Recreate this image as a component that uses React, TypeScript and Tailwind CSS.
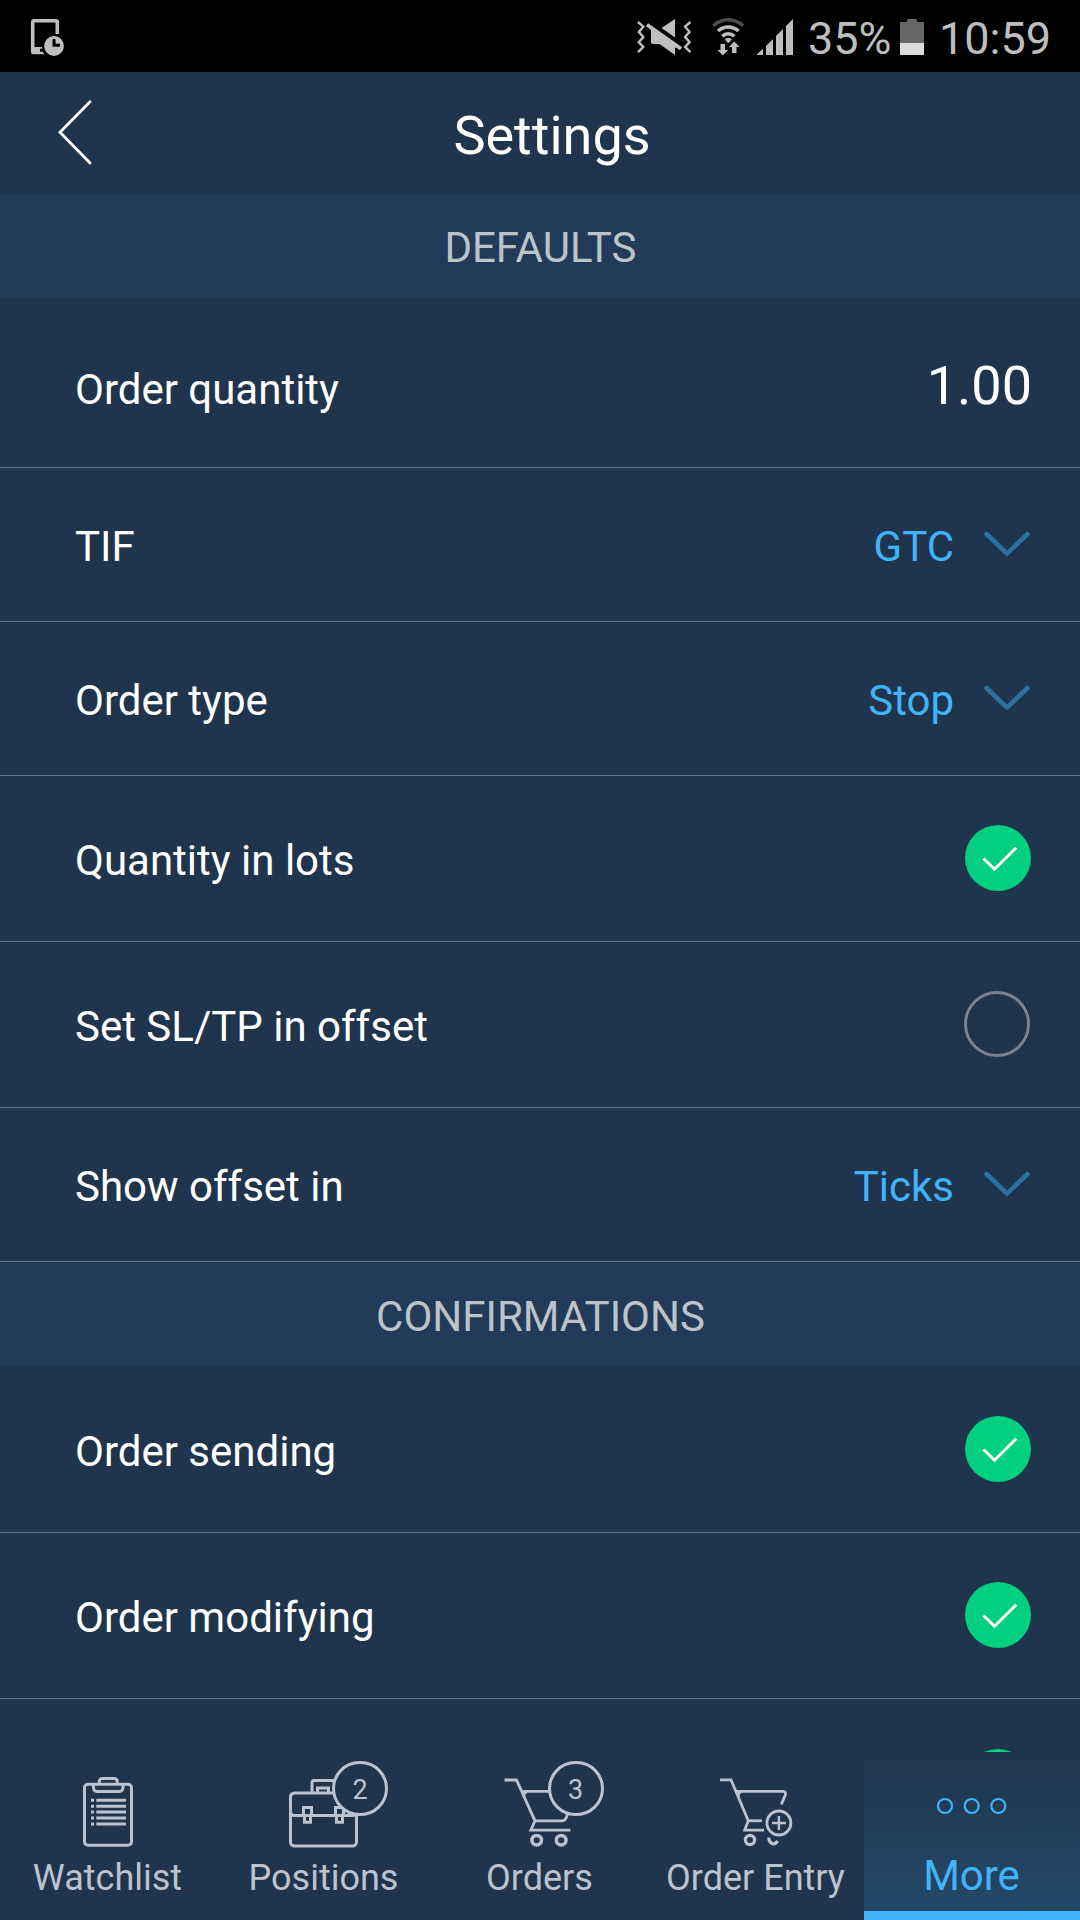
import type { ReactNode } from 'react';

function DeviceClockIcon() {
  return (
    <svg width="40" height="44" viewBox="28 15 40 44" className="block">
      <path
        d="M57.3 34V22a1.3 1.3 0 0 0-1.3-1.3H34A1.3 1.3 0 0 0 32.7 22v29"
        fill="none"
        stroke="#bebebe"
        strokeWidth="3.6"
      />
      <path d="M31 47h11.3v1.7H40v3h2.5l2 2.6H33a2 2 0 0 1-2-2z" fill="#bebebe" />
      <circle cx="54" cy="46" r="11.6" fill="#000" />
      <circle cx="54" cy="46" r="9.9" fill="#bebebe" />
      <path d="M54 39v6.2h6" fill="none" stroke="#000" strokeWidth="3" />
    </svg>
  );
}

function VibrateMuteIcon() {
  return (
    <svg width="56" height="44" viewBox="636 15 56 44" className="block">
      <g fill="none" stroke="#bebebe" strokeWidth="2.4">
        <path d="M638 22l5.3 4.7-4.5 5.2 4.5 5-4.5 5.2 4.5 4.8-5.3 5.3" />
        <path d="M690.4 22l-5.3 4.7 4.5 5.2-4.5 5 4.5 5.2-4.5 4.8 5.3 5.3" />
      </g>
      <path d="M675 19v18.500l-13.500-9.500z" fill="#bebebe" />
      <path d="M651 29l30 19.500-6-1V55l-15.500-11H653a2 2 0 0 1-2-2z" fill="#bebebe" />
      <path d="M647 24.800l34 24" stroke="#bebebe" strokeWidth="3.800" />
    </svg>
  );
}

function WifiIcon() {
  return (
    <svg width="34" height="44" viewBox="711 15 34 44" className="block">
      <g fill="none" strokeWidth="3.500">
        <path d="M713.500 25.800a21 21 0 0 1 29.500 0" stroke="#4d4d4d" />
        <path d="M718 31a15 15 0 0 1 20.500 0" stroke="#bebebe" />
        <path d="M722.300 36.300a8.500 8.500 0 0 1 12 0" stroke="#bebebe" />
      </g>
      <path d="M724.800 39.500q3.500-2.800 7 0l-3.500 3.800z" fill="#bebebe" />
      <path d="M720.500 44h4.500v6h3l-5.200 5.500-5.300-5.500h3z" fill="#bebebe" />
      <path d="M732 53v-6h-3l5.200-5.500 5.300 5.500h-3v6z" fill="#bebebe" />
    </svg>
  );
}

function SignalIcon() {
  return (
    <svg width="38" height="44" viewBox="756 15 38 44" className="block">
      <g fill="#bebebe">
        <path d="M756.500 55l6.500-6.500V55z" />
        <path d="M766 46l7-7v16h-7z" />
        <path d="M776 36l7-7v26h-7z" />
        <path d="M786 26l7-7v36h-7z" />
      </g>
    </svg>
  );
}

function BatteryIcon() {
  return (
    <svg width="24" height="44" viewBox="900 15 24 44" className="block">
      <path d="M900 22h7v-3h10v3h7v21h-24z" fill="#666" />
      <path d="M900 43h24v12h-24z" fill="#dadada" />
    </svg>
  );
}

function StatusBar() {
  return (
    <div className="flex h-[72px] items-center bg-black pl-[28px] text-[45px] leading-[53px] text-[#bebebe]">
      <div className="mt-[2px]">
        <DeviceClockIcon />
      </div>
      <div className="ml-auto mt-[2px] flex items-center">
        <VibrateMuteIcon />
        <div className="ml-[19px]"><WifiIcon /></div>
        <div className="ml-[11px]"><SignalIcon /></div>
      </div>
      <span className="ml-[14px] mt-[4px] w-[92px] whitespace-nowrap">35%</span>
      <div className="mt-[2px]"><BatteryIcon /></div>
      <span className="ml-[15px] mt-[4px] w-[141px] whitespace-nowrap">10:59</span>
    </div>
  );
}

function Header() {
  return (
    <header className="grid h-[121px] grid-cols-[100px_1fr_80px] items-center">
      <svg width="40" height="68" viewBox="54 98 40 68" className="-mt-[1px] ml-[54px] block">
        <path d="M90 101.800L60 132.200l30 30.800" fill="none" stroke="#fff" strokeWidth="2.800" strokeLinecap="round" />
      </svg>
      <h1 className="mt-[7px] pl-[4px] text-center text-[54px] leading-[64px] text-white">Settings</h1>
    </header>
  );
}

function SectionTitle({ children }: { children: ReactNode }) {
  return (
    <h2 className="flex h-[105px] items-center justify-center bg-[#223b58] pl-[1px] pt-[4px] text-[42px] leading-[50px] text-[#bbc4cb]">
      {children}
    </h2>
  );
}

function Row({ label, className, children }: { label: string; className: string; children?: ReactNode }) {
  return (
    <div className={`flex items-center justify-between border-b border-[#66758a] pl-[75px] ${className}`}>
      <span className="mt-[4px] text-[42px] leading-[50px] text-white">{label}</span>
      {children}
    </div>
  );
}

function SelectValue({ value }: { value: string }) {
  return (
    <div className="flex items-center pr-[49px] text-[#41b3f9]">
      <span className="mt-[4px] text-[42px] leading-[50px]">{value}</span>
      <svg width="48" height="28" viewBox="0 0 48 28" className="-mt-[2px] ml-[29px] block">
        <path d="M3.500 4l20.500 19.700L44.500 4" fill="none" stroke="#2d729f" strokeWidth="4.600" strokeLinecap="round" strokeLinejoin="round" />
      </svg>
    </div>
  );
}

function Checked() {
  return (
    <svg width="66" height="66" viewBox="0 0 66 66" className="-mt-[1px] mr-[49px] block shrink-0">
      <circle cx="33" cy="33" r="33" fill="#02cf7f" />
      <path d="M18.500 33.500L29.500 44.200 51.200 22.800" fill="none" stroke="#fff" strokeWidth="3" />
    </svg>
  );
}

function Unchecked() {
  return <span className="-mt-[1px] mr-[50px] h-[66px] w-[66px] rounded-full border-[3px] border-[#7b848f]" />;
}

function Badge({ count, className }: { count: number; className: string }) {
  return (
    <span
      className={`absolute top-[9px] flex h-[55px] w-[56px] items-center justify-center rounded-full border-[3px] border-[#bcc3d0] bg-[#1f354d] pt-[2px] text-[27px] leading-[32px] text-[#bcc3d0] ${className}`}
    >
      {count}
    </span>
  );
}

function WatchlistIcon() {
  return (
    <svg width="216" height="108" viewBox="0 1752 216 108" className="block">
      <g fill="none" stroke="#bcc3d0" strokeWidth="3">
        <path d="M99.500 1784.300H88a3.500 3.500 0 0 0-3.500 3.500v54a3.500 3.500 0 0 0 3.500 3.500h40a3.500 3.500 0 0 0 3.500-3.500v-54a3.500 3.500 0 0 0-3.500-3.500h-30" />
        <path d="M99.300 1784v-2.500a3 3 0 0 1 3-3h12a3 3 0 0 1 3 3v2.500" />
        <path d="M93.500 1785v2.500a4 4 0 0 0 4 4h21.500a4 4 0 0 0 4-4v-2.500" />
        <path d="M91 1800.300h3M96.300 1800.300H126M91 1806.200h3M96.300 1806.200H126M91 1812h3M96.300 1812H126M91 1818h3M96.300 1818H126M91 1823.900h3M96.300 1823.900H126" />
      </g>
    </svg>
  );
}

function PositionsIcon() {
  return (
    <svg width="216" height="108" viewBox="216 1752 216 108" className="block">
      <g fill="none" stroke="#bcc3d0" strokeWidth="3">
        <rect x="290.500" y="1793" width="66" height="53" rx="4" />
        <path d="M290.500 1811v-1.500M290.500 1811a4 4 0 0 0 4 4.500h58a4 4 0 0 0 4-4" />
        <path d="M312 1792v-9a2.500 2.500 0 0 1 2.500-2.500H340M317.500 1792v-4h11v4" />
        <path d="M303.500 1814v-6.500h8v6.500M304.500 1816v6.200h6V1816" />
        <path d="M335.500 1814v-6.500h8v6.500M336.500 1816v6.200h6V1816" />
      </g>
    </svg>
  );
}

function OrdersIcon() {
  return (
    <svg width="216" height="108" viewBox="432 1752 216 108" className="block">
      <g fill="none" stroke="#bcc3d0" strokeWidth="2.800">
        <path d="M504.500 1780h12l18.500 40.800-4.200 9.400H570.500" />
        <path d="M523 1791.300h49q4.500 0 3 4.500l-9 22.500q-1 2.500-4 2.500h-27" />
        <path d="M524 1797q-1-4 3-5" />
        <circle cx="536.700" cy="1840.200" r="4.800" strokeWidth="3.500" />
        <circle cx="561.200" cy="1840.200" r="4.800" strokeWidth="3.500" />
      </g>
    </svg>
  );
}

function OrderEntryIcon() {
  return (
    <svg width="216" height="108" viewBox="648 1752 216 108" className="block">
      <g fill="none" stroke="#bcc3d0" strokeWidth="2.800">
        <path d="M720 1779.800h11l17.300 41-3.600 9.300H764" />
        <path d="M736 1791.300h47q3.500 0 2.200 4L781.300 1804.500" />
        <path d="M748 1820.800h14" />
        <path d="M738.500 1797q-1-4 2.500-5" />
        <circle cx="750" cy="1840" r="4.600" strokeWidth="3.300" />
        <path d="M768.800 1837.500c0 6 5.200 8.800 8.900 3.500" strokeWidth="3.200" />
        <circle cx="778.900" cy="1823" r="12" />
        <path d="M778.900 1816v14M772 1823h14" strokeWidth="2.400" />
      </g>
    </svg>
  );
}

function MoreIcon() {
  return (
    <svg width="216" height="108" viewBox="864 1752 216 108" className="block">
      <g fill="none" stroke="#41b3f9" strokeWidth="2.200">
        <circle cx="945" cy="1806" r="7" />
        <circle cx="971.700" cy="1806" r="7" />
        <circle cx="998.300" cy="1806" r="7" />
      </g>
    </svg>
  );
}

function NavItem({ icon, label, badge }: { icon: ReactNode; label: string; badge?: ReactNode }) {
  return (
    <div className="relative h-[168px]">
      {icon}
      {badge}
      <div className="-mt-[3px] whitespace-nowrap pr-[1px] text-center text-[36px] leading-[42px] text-[#bcc3d0]">{label}</div>
    </div>
  );
}

function BottomNav() {
  return (
    <nav className="grid h-[168px] grid-cols-5 bg-[#1f354d]">
      <NavItem icon={<WatchlistIcon />} label="Watchlist" />
      <NavItem icon={<PositionsIcon />} label="Positions" badge={<Badge count={2} className="left-[116px]" />} />
      <NavItem icon={<OrdersIcon />} label="Orders" badge={<Badge count={3} className="left-[115.500px]" />} />
      <NavItem icon={<OrderEntryIcon />} label="Order Entry" />
      <div className="h-[168px] border-b-[9px] border-[#41b3f9] bg-linear-to-b from-[#1f354d] to-[#244968]">
        <MoreIcon />
        <div className="-mt-[9px] pr-[1px] text-center text-[42px] leading-[50px] text-[#41b3f9]">More</div>
      </div>
    </nav>
  );
}

export default function App() {
  return (
    <div className="flex h-[1920px] w-[1080px] flex-col overflow-hidden bg-[#1f354d] font-['Roboto',sans-serif]">
      <StatusBar />
      <Header />
      <main className="h-[1559px] overflow-hidden">
        <SectionTitle>DEFAULTS</SectionTitle>
        <Row label="Order quantity" className="h-[170px] pt-[10px]">
          <span className="-mt-[4px] pr-[48px] text-[54px] leading-[64px] text-white">1.00</span>
        </Row>
        <Row label="TIF" className="h-[154px]"><SelectValue value="GTC" /></Row>
        <Row label="Order type" className="h-[154px]"><SelectValue value="Stop" /></Row>
        <Row label="Quantity in lots" className="h-[166px]"><Checked /></Row>
        <Row label="Set SL/TP in offset" className="h-[166px]"><Unchecked /></Row>
        <Row label="Show offset in" className="h-[154px]"><SelectValue value="Ticks" /></Row>
        <SectionTitle>CONFIRMATIONS</SectionTitle>
        <Row label="Order sending" className="h-[166px]"><Checked /></Row>
        <Row label="Order modifying" className="h-[166px]"><Checked /></Row>
        <div className="flex h-[166px] items-center justify-end"><Checked /></div>
      </main>
      <BottomNav />
    </div>
  );
}
